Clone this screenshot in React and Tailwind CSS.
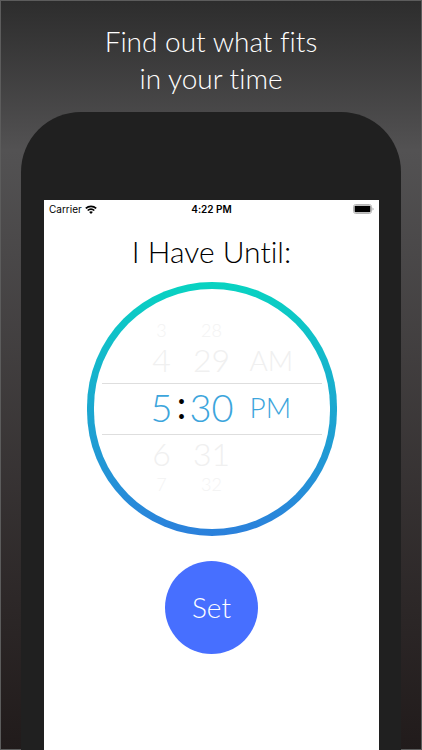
import React, { useState } from 'react';

const pad = (n) => String((n + 60) % 60).padStart(2, '0');
const wrapHour = (h) => ((h + 11) % 12) + 1;

function WifiIcon() {
  return (
    <svg viewBox="0 0 12 9" className="w-3 h-[9px]" aria-hidden="true">
      <path d="M.8 3.4C3.8.6 8.2.6 11.2 3.4" fill="none" stroke="#000" strokeWidth="1.7" />
      <path d="M2.7 5.5c1.8-1.8 4.8-1.8 6.6 0" fill="none" stroke="#000" strokeWidth="1.6" />
      <path d="M6 9 4.1 6.9c1.1-1 2.7-1 3.8 0z" fill="#000" />
    </svg>
  );
}

function BatteryIcon() {
  return (
    <svg viewBox="0 0 21 10" className="w-[21px] h-[10px]" aria-hidden="true">
      <rect x="0.5" y="0.5" width="18" height="9" rx="2.2" fill="#fff" stroke="#b5b5b5" />
      <rect x="1.6" y="1.8" width="15.8" height="6.4" rx="0.8" fill="#000" />
      <path d="M19.6 3.4c1.2.5 1.2 2.7 0 3.2z" fill="#8a8a8a" />
    </svg>
  );
}

function StatusBar() {
  return (
    <div className="grid grid-cols-3 items-center h-[18px] px-[5px] font-['Inter','Roboto',sans-serif] text-[10px] text-black">
      <div className="flex items-center gap-[3px]">
        <span className="font-normal">Carrier</span>
        <WifiIcon />
      </div>
      <span className="text-center font-semibold">4:22 PM</span>
      <div className="flex justify-end">
        <BatteryIcon />
      </div>
    </div>
  );
}

function Wheel({ label, className, near, values, onStep }) {
  const [before2, before, current, after, after2] = values;
  const nearClass = `h-[38px] leading-[38px] text-[#f0f0f0] ${near}`;
  const farClass = 'h-[22px] text-lg leading-[22px] text-[#f3f3f3]';

  return (
    <div role="group" aria-label={label} className={`flex flex-col ${className}`}>
      <button type="button" onClick={() => onStep(-2)} className={farClass}>
        {before2}
      </button>
      <button type="button" onClick={() => onStep(-1)} className={nearClass}>
        {before}
      </button>
      <span className="h-14 leading-14 text-[#3ca5dc]">{current}</span>
      <button type="button" onClick={() => onStep(1)} className={nearClass}>
        {after}
      </button>
      <button type="button" onClick={() => onStep(2)} className={farClass}>
        {after2}
      </button>
    </div>
  );
}

function PeriodWheel({ pm, onToggle }) {
  const side = 'h-[38px] leading-[38px] text-left text-[28px] text-[#f0f0f0]';

  return (
    <div role="group" aria-label="AM or PM" className="flex flex-col justify-center w-[60px] pl-4 text-[28px]">
      {pm ? (
        <button type="button" onClick={onToggle} className={side}>AM</button>
      ) : (
        <div className="h-[38px]" />
      )}
      <span className="h-14 leading-14 text-[#3ca5dc]">{pm ? 'PM' : 'AM'}</span>
      {pm ? (
        <div className="h-[38px]" />
      ) : (
        <button type="button" onClick={onToggle} className={side}>PM</button>
      )}
    </div>
  );
}

function TimePicker() {
  const [hour, setHour] = useState(5);
  const [minute, setMinute] = useState(30);
  const [pm, setPm] = useState(true);

  return (
    <div className="w-[250px] h-[254px] rounded-full p-[7px] bg-linear-to-b from-[#08d3c1] via-[#1ba7d0] to-[#2b80dc]">
      <div className="relative h-full rounded-full bg-white flex items-center justify-center">
        <div className="absolute inset-x-2 h-[52px] border-y border-[#dedede] pointer-events-none" />
        <div className="flex items-center pl-5 pb-1 text-[38px]">
          <Wheel
            label="Hour"
            className="w-6 text-center"
            near="text-[32px]"
            values={[-2, -1, 0, 1, 2].map((d) => wrapHour(hour + d))}
            onStep={(d) => setHour(wrapHour(hour + d))}
          />
          <span className="w-4 h-14 leading-[50px] text-center font-normal text-black">:</span>
          <Wheel
            label="Minute"
            className="w-11 text-center"
            near="text-[32px]"
            values={[-2, -1, 0, 1, 2].map((d) => pad(minute + d))}
            onStep={(d) => setMinute((minute + d + 60) % 60)}
          />
          <PeriodWheel pm={pm} onToggle={() => setPm(!pm)} />
        </div>
      </div>
    </div>
  );
}

export default function App() {
  return (
    <div className="min-h-screen flex flex-col border border-[#5c5c5c] bg-linear-to-b from-[#2d2d2d] via-[#535253] via-20% to-[#211b1b] font-['Lato',sans-serif] font-light [font-variant-ligatures:none]">
      <p className="pt-[22px] pb-[15px] text-center text-[28px] leading-[37px] text-white">
        Find out what fits
        <br />
        in your time
      </p>

      <div className="flex-1 flex flex-col mx-5 pl-[23px] pr-[22px] pt-[88px] -mb-px rounded-t-[60px] bg-[#202020]">
        <main className="flex-1 flex flex-col bg-white">
          <StatusBar />
          <div className="flex flex-col items-center pt-[14px]">
            <h1 className="text-[30px] leading-[38px] text-black">I Have Until:</h1>
            <div className="pt-3">
              <TimePicker />
            </div>
            <button type="button" className="mt-[25px] size-[93px] pb-0.5 rounded-full bg-[#476fff] text-[28px] text-white">
              Set
            </button>
          </div>
        </main>
      </div>
    </div>
  );
}
